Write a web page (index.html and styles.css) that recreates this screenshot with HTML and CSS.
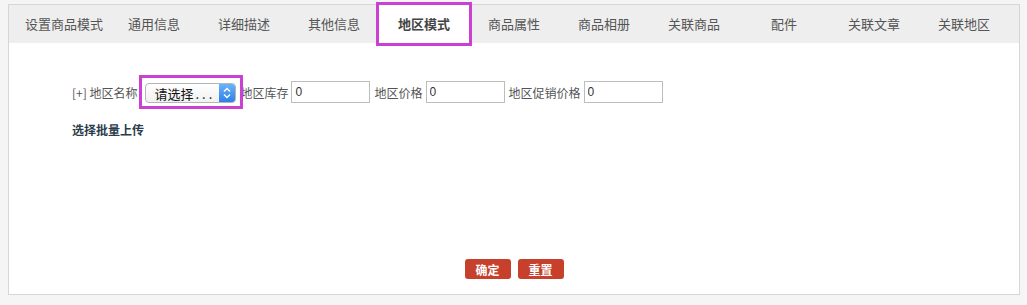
FILE: index.html
```html
<!DOCTYPE html>
<html lang="zh-CN">
<head>
  <meta charset="UTF-8" />
  <title>地区模式</title>
  <link rel="stylesheet" href="styles.css">
</head>
<body>
  <div class="panel">
    <ul class="tabs">
      <li>设置商品模式</li>
      <li>通用信息</li>
      <li>详细描述</li>
      <li>其他信息</li>
      <li class="active">地区模式</li>
      <li>商品属性</li>
      <li>商品相册</li>
      <li>关联商品</li>
      <li>配件</li>
      <li>关联文章</li>
      <li>关联地区</li>
    </ul>
    <div class="content">
      <div class="area-row">
        <span class="label">[+] 地区名称</span>
        <span class="select-mark">
          <span class="select">
            <span class="select-text">请选择<span class="dots">...</span></span>
            <span class="select-arrow">
              <svg width="8" height="12" viewBox="0 0 8 12">
                <path d="M1 4.5 L4 1.5 L7 4.5 M1 7.5 L4 10.5 L7 7.5" fill="none" stroke="#fff" stroke-width="1.4"/>
              </svg>
            </span>
          </span>
        </span>
        <span class="label">地区库存</span>
        <input type="text" value="0">
        <span class="label">地区价格</span>
        <input type="text" value="0">
        <span class="label">地区促销价格</span>
        <input type="text" value="0">
      </div>
      <a class="batch" href="#">选择批量上传</a>
    </div>
    <div class="actions">
      <button>确定</button>
      <button>重置</button>
    </div>
  </div>
</body>
</html>
```

FILE: styles.css
```css
body {
  margin: 0;
  padding: 4px 7px 0 8px;
  background: #f5f5f5;
  font-family: "Noto Sans CJK SC", "DejaVu Sans", sans-serif;
  font-size: 13px;
  color: #555;
}

.panel {
  height: 289px;
  border: 1px solid #d6d6d6;
  background: #fff;
  display: flex;
  flex-direction: column;
}

.tabs {
  list-style: none;
  margin: 0;
  padding: 0 0 0 10px;
  height: 38px;
  background: #eee;
  display: flex;
}

.tabs li {
  width: 90px;
  text-align: center;
  line-height: 38px;
  color: #555;
  white-space: nowrap;
}

.tabs li.active {
  background: #fff;
  color: #444;
  font-weight: bold;
  outline: 3px solid #cc3fd3;
  position: relative;
  z-index: 1;
}

.content {
  padding: 38px 0 0 63px;
  font-size: 12px;
}

.area-row {
  display: flex;
  align-items: center;
  height: 22px;
}

.label {
  color: #555;
  white-space: nowrap;
}

/* magenta highlight around the dropdown */
.select-mark {
  display: inline-flex;
  margin: 0 -3px 0 2px;
  padding: 8px 7px 6px 6px;
  outline: 3px solid #cc3fd3;
  outline-offset: -3px;
  position: relative;
  z-index: 1;
}

.select {
  display: inline-flex;
  align-items: center;
  width: 91px;
  height: 20px;
  border: 1px solid #b5b5b5;
  border-radius: 4px;
  background: linear-gradient(#fff, #f1f1f1);
  box-sizing: border-box;
  overflow: hidden;
}

.select-text {
  flex: 1;
  padding-left: 8px;
  color: #111;
  font-size: 13px;
  white-space: nowrap;
}

.dots {
  letter-spacing: 3px;
  margin-left: 2px;
}

.select-arrow {
  width: 16px;
  height: 100%;
  display: flex;
  align-items: center;
  justify-content: center;
  background: linear-gradient(#6cb3fa, #2f7fe8);
}

input[type="text"] {
  width: 79px;
  height: 22px;
  box-sizing: border-box;
  margin: 0 4px 0 3px;
  padding: 0 3px;
  border: 1px solid #bdbdbd;
  font-family: "Liberation Sans", sans-serif;
  font-size: 12px;
  color: #333;
}

.batch {
  display: inline-block;
  margin-top: 18px;
  color: #2b3c4c;
  font-weight: bold;
  text-decoration: none;
}

.actions {
  margin-top: auto;
  padding-bottom: 15px;
  display: flex;
  justify-content: center;
  gap: 7px;
}

.actions button {
  width: 46px;
  height: 20px;
  padding: 0;
  border: none;
  border-radius: 3px;
  background: #c7402b;
  color: #fff;
  font-family: "Noto Sans CJK SC", sans-serif;
  font-size: 12px;
  font-weight: bold;
  cursor: pointer;
}
```
